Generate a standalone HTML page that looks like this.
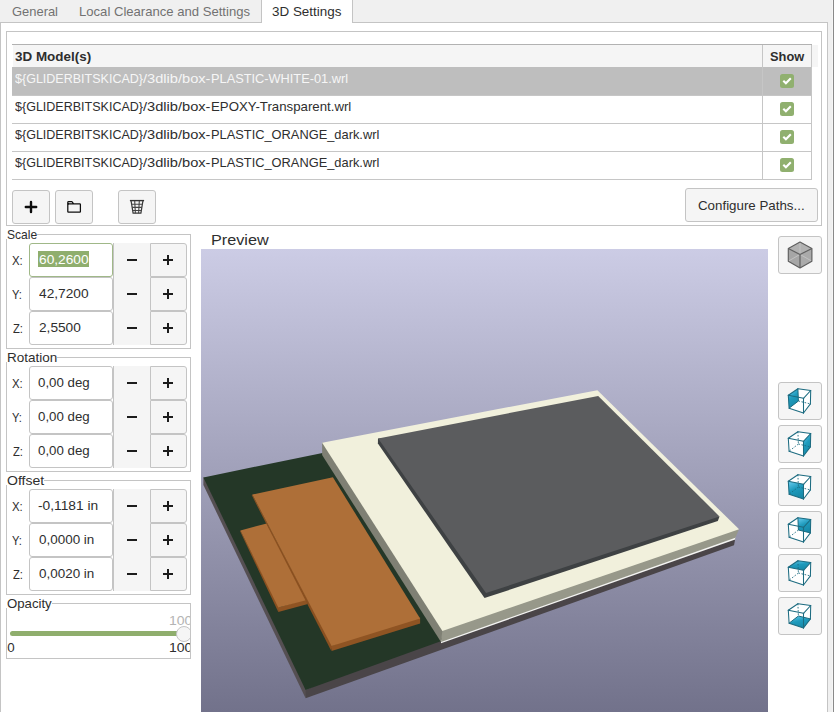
<!DOCTYPE html>
<html>
<head>
<meta charset="utf-8">
<title>3D Settings</title>
<style>
html,body{margin:0;padding:0;}
body{width:834px;height:712px;overflow:hidden;background:#f0f0f0;position:relative;
  font-family:"Liberation Sans",sans-serif;font-size:13.33px;color:#2e2e2e;}
.abs{position:absolute;}
.t{position:absolute;white-space:nowrap;line-height:16px;height:16px;transform-origin:0 50%;}
.b{font-weight:bold;}
#nb{left:0;top:22px;width:826px;height:700px;background:#fff;border:1px solid #c4c4c4;}
#tabline{left:0;top:21px;width:828px;height:1px;background:#c8c8c8;}
#tab3{left:261px;top:-2px;width:90px;height:24px;background:#fff;border:1px solid #c4c4c4;border-bottom:none;}
#rstrip{left:832px;top:0;width:1px;height:712px;background:#f6f6f6;}
#rstrip2{left:833px;top:0;width:1px;height:712px;background:#8a8a8a;}
.sbox{position:absolute;border:1px solid #c4c4c4;box-sizing:border-box;}
.sblab{position:absolute;background:#fff;white-space:nowrap;line-height:14px;height:14px;}
#gtop{left:12px;top:44px;width:800px;height:1px;background:#b2b2b2;}
#ghead{left:13px;top:45px;width:805px;height:22px;background:#f5f5f5;}
.grow{position:absolute;left:12px;width:799px;height:27px;border-bottom:1px solid #c6c6c6;}
.gsel{background:#bebebe;}
.gv{position:absolute;width:1px;background:#c6c6c6;}
.cb{position:absolute;left:780px;width:14px;height:14px;border-radius:2.5px;background:#90b06f;}
.cb svg{position:absolute;left:0;top:0;}
.btn{position:absolute;box-sizing:border-box;border:1px solid #c4c4c4;border-radius:3px;background:#f5f5f5;}
.ent{position:absolute;left:29px;width:84px;height:34px;box-sizing:border-box;border:1px solid #c4c4c4;border-radius:3px;background:#fff;}
.ent.foc{border-color:#a0b888;}
.minus{position:absolute;left:113px;width:37px;height:34px;box-sizing:border-box;background:#f5f5f5;border-left:1px solid #c4c4c4;}
.plus{position:absolute;left:150px;width:37px;height:34px;box-sizing:border-box;background:#f5f5f5;border:1px solid #c4c4c4;border-radius:0 3px 3px 0;}
.mi{position:absolute;left:13px;top:16px;width:10px;height:2px;background:#1c1c1c;}
.ph{position:absolute;left:12px;top:15px;width:10px;height:2px;background:#1c1c1c;}
.pv{position:absolute;left:16px;top:11px;width:2px;height:10px;background:#1c1c1c;}
</style>
</head>
<body>
<div class="abs" id="nb"></div>
<div class="abs" id="tab3"></div>
<div class="t" id="tx_gen" style="left:11.5px;top:4px;transform:scaleX(0.9700);color:#727272;">General</div>
<div class="t" id="tx_loc" style="left:79px;top:4px;transform:scaleX(0.9821);color:#727272;">Local Clearance and Settings</div>
<div class="t" id="tx_3d" style="left:272.2px;top:4px;transform:scaleX(1.0072);">3D Settings</div>
<div class="abs" id="rstrip"></div><div class="abs" id="rstrip2"></div>
<div class="sbox" style="left:6px;top:31px;width:816px;height:195px;"></div>
<div class="abs" id="gtop"></div><div class="abs" id="ghead"></div>
<div class="grow gsel" style="top:67px;height:28px;"></div>
<div class="grow" style="top:96px;"></div>
<div class="grow" style="top:124px;"></div>
<div class="grow" style="top:152px;"></div>
<div class="gv" style="left:762px;top:45px;height:135px;"></div>
<div class="gv" style="left:811px;top:45px;height:135px;"></div>
<div class="t b" id="tx_h1" style="left:15.1px;top:49px;transform:scaleX(1.0075);">3D Model(s)</div>
<div class="t b" id="tx_h2" style="left:770.2px;top:49px;transform:scaleX(0.9621);">Show</div>
<div class="t" id="tx_r1a" style="left:14.8px;top:70.6px;transform:scaleX(0.9391);color:#f6f6f6;">${GLIDERBITSKICAD}</div>
<div class="t" id="tx_r1b" style="left:142.8px;top:70.6px;transform:scaleX(1.0976);color:#f6f6f6;">/3dlib/box-</div>
<div class="t" id="tx_r1c" style="left:211.3px;top:70.6px;transform:scaleX(0.9586);color:#f6f6f6;">PLASTIC-WHITE-01.wrl</div>
<div class="t" id="tx_r2a" style="left:14.8px;top:98.6px;transform:scaleX(0.9391);">${GLIDERBITSKICAD}</div>
<div class="t" id="tx_r2b" style="left:142.8px;top:98.6px;transform:scaleX(1.0976);">/3dlib/box-</div>
<div class="t" id="tx_r2c" style="left:211.3px;top:98.6px;transform:scaleX(0.9934);">EPOXY-Transparent.wrl</div>
<div class="t" id="tx_r3a" style="left:14.8px;top:126.6px;transform:scaleX(0.9391);">${GLIDERBITSKICAD}</div>
<div class="t" id="tx_r3b" style="left:142.8px;top:126.6px;transform:scaleX(1.0976);">/3dlib/box-</div>
<div class="t" id="tx_r3c" style="left:211.3px;top:126.6px;transform:scaleX(0.9628);">PLASTIC_ORANGE_dark.wrl</div>
<div class="t" id="tx_r4a" style="left:14.8px;top:154.6px;transform:scaleX(0.9391);">${GLIDERBITSKICAD}</div>
<div class="t" id="tx_r4b" style="left:142.8px;top:154.6px;transform:scaleX(1.0976);">/3dlib/box-</div>
<div class="t" id="tx_r4c" style="left:211.3px;top:154.6px;transform:scaleX(0.9628);">PLASTIC_ORANGE_dark.wrl</div>
<div class="cb" style="top:74px;"><svg width="14" height="14" viewBox="0 0 14 14"><path d="M3.3 6.8 L5.9 9.3 L10.8 4.2" fill="none" stroke="#fff" stroke-width="2.1"/></svg></div>
<div class="cb" style="top:102px;"><svg width="14" height="14" viewBox="0 0 14 14"><path d="M3.3 6.8 L5.9 9.3 L10.8 4.2" fill="none" stroke="#fff" stroke-width="2.1"/></svg></div>
<div class="cb" style="top:130px;"><svg width="14" height="14" viewBox="0 0 14 14"><path d="M3.3 6.8 L5.9 9.3 L10.8 4.2" fill="none" stroke="#fff" stroke-width="2.1"/></svg></div>
<div class="cb" style="top:158px;"><svg width="14" height="14" viewBox="0 0 14 14"><path d="M3.3 6.8 L5.9 9.3 L10.8 4.2" fill="none" stroke="#fff" stroke-width="2.1"/></svg></div>
<div class="btn" style="left:12px;top:190px;width:38px;height:34px;">
<svg class="abs" style="left:-1px;top:-1px;" width="38" height="34" viewBox="0 0 38 34"><path d="M13.8 17 H24.2 M19 11.9 V22.1" fill="none" stroke="#0c0c0c" stroke-width="2.4" stroke-linecap="round"/></svg></div>
<div class="btn" style="left:55px;top:190px;width:38px;height:34px;">
<svg class="abs" style="left:-1px;top:-1px;" width="38" height="34" viewBox="0 0 38 34"><path d="M13.4 13.8 H24.8 Q25.4 13.8 25.4 14.4 V21.5 Q25.4 22.1 24.8 22.1 H13.4 Q12.8 22.1 12.8 21.5 V12.5 Q12.8 11.7 13.6 11.7 H16.9 L18.7 13.8" fill="none" stroke="#0e0e0e" stroke-width="1.25" stroke-linejoin="round"/><path d="M12.8 13.8 H14" fill="none" stroke="#0e0e0e" stroke-width="1.25"/></svg></div>
<div class="btn" style="left:118px;top:190px;width:38px;height:34px;">
<svg class="abs" style="left:-1px;top:-1px;" width="38" height="34" viewBox="0 0 38 34">
<path d="M11.9 10.6 H26.1" stroke="#333" stroke-width="1.4" fill="none"/>
<path d="M13.1 11 L15.1 23.2 H22.9 L24.9 11" stroke="#3a3a3a" stroke-width="1.25" fill="none"/>
<path d="M16.7 11 L17.4 23.2 M21.3 11 L20.6 23.2 M13.6 14.3 H24.4 M14.1 17.4 H23.9 M14.6 20.5 H23.4" stroke="#444" stroke-width="1.1" fill="none"/>
</svg></div>
<div class="btn" style="left:685px;top:188px;width:133px;height:34px;"></div>
<div class="t" id="tx_cfg" style="left:698.4px;top:197.9px;transform:scaleX(0.9992);">Configure Paths...</div>
<div class="sbox" style="left:6px;top:234px;width:185px;height:115px;"></div>
<div class="abs" style="left:6px;top:233px;width:31px;height:6px;background:#fff;"></div>
<div class="t" id="tx_g0" style="left:6.6px;top:226.8px;transform:scaleX(0.9057);">Scale</div>
<div class="minus" style="top:243px;"><div class="mi"></div></div>
<div class="plus" style="top:243px;"><div class="ph"></div><div class="pv"></div></div>
<div class="ent foc" style="top:243px;"></div>
<div class="abs" style="left:38px;top:251px;width:51px;height:16px;background:#8fae6d;"></div>
<div class="t" id="tx_l00" style="left:12.4px;top:252.8px;transform:scaleX(0.8576);">X:</div>
<div class="t" id="tx_v00" style="left:38.6px;top:252.3px;transform:scaleX(1.0293);color:#fff;">60,2600</div>
<div class="minus" style="top:277px;"><div class="mi"></div></div>
<div class="plus" style="top:277px;"><div class="ph"></div><div class="pv"></div></div>
<div class="ent" style="top:277px;"></div>
<div class="t" id="tx_l01" style="left:12.4px;top:286.8px;transform:scaleX(0.8348);">Y:</div>
<div class="t" id="tx_v01" style="left:38.6px;top:286.3px;transform:scaleX(1.0293);">42,7200</div>
<div class="minus" style="top:311px;"><div class="mi"></div></div>
<div class="plus" style="top:311px;"><div class="ph"></div><div class="pv"></div></div>
<div class="ent" style="top:311px;"></div>
<div class="t" id="tx_l02" style="left:12.8px;top:320.8px;transform:scaleX(0.8432);">Z:</div>
<div class="t" id="tx_v02" style="left:38.6px;top:320.3px;transform:scaleX(1.0254);">2,5500</div>
<div class="sbox" style="left:6px;top:357px;width:185px;height:115px;"></div>
<div class="abs" style="left:6px;top:356px;width:51px;height:6px;background:#fff;"></div>
<div class="t" id="tx_g1" style="left:6.6px;top:349.8px;transform:scaleX(1.0130);">Rotation</div>
<div class="minus" style="top:366px;"><div class="mi"></div></div>
<div class="plus" style="top:366px;"><div class="ph"></div><div class="pv"></div></div>
<div class="ent" style="top:366px;"></div>
<div class="t" id="tx_l10" style="left:12.4px;top:375.8px;transform:scaleX(0.8576);">X:</div>
<div class="t" id="tx_v10" style="left:38.2px;top:375.3px;transform:scaleX(0.9963);">0,00 deg</div>
<div class="minus" style="top:400px;"><div class="mi"></div></div>
<div class="plus" style="top:400px;"><div class="ph"></div><div class="pv"></div></div>
<div class="ent" style="top:400px;"></div>
<div class="t" id="tx_l11" style="left:12.4px;top:409.8px;transform:scaleX(0.8348);">Y:</div>
<div class="t" id="tx_v11" style="left:38.2px;top:409.3px;transform:scaleX(0.9963);">0,00 deg</div>
<div class="minus" style="top:434px;"><div class="mi"></div></div>
<div class="plus" style="top:434px;"><div class="ph"></div><div class="pv"></div></div>
<div class="ent" style="top:434px;"></div>
<div class="t" id="tx_l12" style="left:12.8px;top:443.8px;transform:scaleX(0.8432);">Z:</div>
<div class="t" id="tx_v12" style="left:38.2px;top:443.3px;transform:scaleX(0.9963);">0,00 deg</div>
<div class="sbox" style="left:6px;top:480px;width:185px;height:115px;"></div>
<div class="abs" style="left:6px;top:479px;width:38px;height:6px;background:#fff;"></div>
<div class="t" id="tx_g2" style="left:6.6px;top:472.8px;transform:scaleX(1.0535);">Offset</div>
<div class="minus" style="top:489px;"><div class="mi"></div></div>
<div class="plus" style="top:489px;"><div class="ph"></div><div class="pv"></div></div>
<div class="ent" style="top:489px;"></div>
<div class="t" id="tx_l20" style="left:12.4px;top:498.8px;transform:scaleX(0.8576);">X:</div>
<div class="t" id="tx_v20" style="left:38px;top:498.3px;transform:scaleX(1.0326);">-0,1181 in</div>
<div class="minus" style="top:523px;"><div class="mi"></div></div>
<div class="plus" style="top:523px;"><div class="ph"></div><div class="pv"></div></div>
<div class="ent" style="top:523px;"></div>
<div class="t" id="tx_l21" style="left:12.4px;top:532.8px;transform:scaleX(0.8348);">Y:</div>
<div class="t" id="tx_v21" style="left:38.7px;top:532.3px;transform:scaleX(1.0083);">0,0000 in</div>
<div class="minus" style="top:557px;"><div class="mi"></div></div>
<div class="plus" style="top:557px;"><div class="ph"></div><div class="pv"></div></div>
<div class="ent" style="top:557px;"></div>
<div class="t" id="tx_l22" style="left:12.8px;top:566.8px;transform:scaleX(0.8432);">Z:</div>
<div class="t" id="tx_v22" style="left:38.7px;top:566.3px;transform:scaleX(1.0083);">0,0020 in</div>
<div class="sbox" style="left:6px;top:603px;width:185px;height:56px;"></div>
<div class="abs" style="left:6px;top:602px;width:46px;height:6px;background:#fff;"></div>
<div class="t" id="tx_g3" style="left:6.6px;top:595.8px;transform:scaleX(0.9892);">Opacity</div>
<div class="abs" style="left:10px;top:631px;width:176px;height:5px;border-radius:2.5px;background:#8fae6d;"></div>
<div class="abs" style="left:6px;top:600px;width:184px;height:60px;overflow:hidden;"><div class="abs" style="left:170px;top:25.6px;width:16px;height:16px;box-sizing:border-box;border-radius:8px;border:1px solid #c4c4c4;background:#f5f5f5;"></div><div class="t" id="tx_o1" style="left:162.7px;top:13px;color:#b4b4b4;transform:scaleX(1.05);">100</div><div class="t" id="tx_o2" style="left:162.7px;top:40px;transform:scaleX(1.05);">100</div></div>
<div class="t" id="tx_o0" style="left:7.3px;top:640px;">0</div>
<div class="t" id="tx_prev" style="left:210.6px;top:231.8px;transform:scaleX(1.1116);font-size:14.6px;">Preview</div>
<div class="abs" id="canvas" style="left:201px;top:249px;width:567px;height:463px;overflow:hidden;background:linear-gradient(#cccce5 0px,#66667f 524px);">
<svg class="abs" style="left:0;top:0;" width="567" height="463" viewBox="201 249 567 463">
<!-- pcb sides -->
<polygon points="203.4,477.4 203.4,485 305.6,698.2 306.6,690 210,478" fill="#554f52"/>
<polygon points="305.6,690 305.6,698.2 734,545.2 735.4,537.8 600,560" fill="#4a4548"/>
<!-- pcb top -->
<polygon points="203.4,477.4 322.5,453 500,480 733,536 305.6,690" fill="#243727"/>
<!-- small orange -->
<polygon points="240.4,530.4 240.2,531.6 278.3,612 279.3,607.4" fill="#8a5020"/>
<polygon points="278.3,607.4 278.3,612 307,604.2 307,599" fill="#8f5423"/>
<polygon points="240.4,530.4 266.7,523.5 307,600 278.3,607.4" fill="#ae6f38"/>
<!-- big orange -->
<polygon points="252.3,494.5 251.9,495.6 331.2,650.8 332.6,646" fill="#8a5020"/>
<polygon points="331.6,646 331.6,651 420.1,623.5 420.1,617.6 380,625" fill="#8f5423"/>
<polygon points="252.3,494.5 332.9,477.2 420.1,618.6 331.6,646" fill="#ae6f38"/>
<!-- white box -->
<polygon points="441,640 441,643.2 735.2,539.5 735.4,536.5" fill="#f4f4f2"/>
<polygon points="322.1,442.7 322.1,455 441,641.9 443.4,631 330,443" fill="#7f8074"/>
<polygon points="442.4,630 441,641.9 735.4,537.8 739,529.2 700,535" fill="#97988a"/>
<polygon points="322.1,442.7 597.4,390.2 739.1,529.3 442.4,631" fill="#f1f0dc"/>
<!-- dark grey box -->
<polygon points="378,438.4 377.9,443.6 484.5,598.1 487.4,593 381,438.4" fill="#3e4143"/>
<polygon points="486,592 484.5,598.1 717.8,520.9 719.5,516.4 700,518" fill="#3e4143"/>
<polygon points="378.2,438.4 598.2,395.9 719.5,516.4 486,593" fill="#5b5c5e"/>
</svg>

</div>
<div class="btn" style="left:778px;top:236px;width:44px;height:38px;"><svg class="abs" style="left:-1px;top:-1px;" width="44" height="38" viewBox="0 0 44 38"><polygon points="22.0,6.1 33.9,12.4 22.0,18.4 10.3,12.4" fill="#b2b2b2"/><polygon points="10.3,12.4 22.0,18.4 22.0,32.0 10.3,25.2" fill="#a6a6a6"/><polygon points="22.0,18.4 33.9,12.4 33.9,25.2 22.0,32.0" fill="#aaaaaa"/><line x1="22" y1="18.4" x2="10.3" y2="25.2" stroke="#c2c2c2" stroke-width="1"/><line x1="22" y1="18.4" x2="33.9" y2="25.2" stroke="#c2c2c2" stroke-width="1"/><line x1="22" y1="18.4" x2="22" y2="6.1" stroke="#c2c2c2" stroke-width="1"/><polygon points="22.0,6.1 33.9,12.4 33.9,25.2 22.0,32.0 10.3,25.2 10.3,12.4" fill="none" stroke="#5e5e5e" stroke-width="1.15" stroke-linejoin="round"/><line x1="22" y1="18.4" x2="10.3" y2="12.4" stroke="#5e5e5e" stroke-width="1.15"/><line x1="22" y1="18.4" x2="33.9" y2="12.4" stroke="#5e5e5e" stroke-width="1.15"/><line x1="22" y1="18.4" x2="22" y2="32" stroke="#5e5e5e" stroke-width="1.15"/></svg></div>
<div class="btn" style="left:778px;top:382px;width:44px;height:38px;"><svg class="abs" style="left:-1px;top:-1px;" width="44" height="38" viewBox="0 0 44 38"><defs><linearGradient id="tg0" x1="0.2" y1="0" x2="0.6" y2="1"><stop offset="0" stop-color="#63c8ea"/><stop offset="0.45" stop-color="#1f9bbd"/><stop offset="1" stop-color="#1788a6"/></linearGradient></defs><polygon points="10.3,13.3 19.9,6.7 32.7,8.5 32.4,21.9 25.5,31.0 11.1,26.2" fill="#fff" stroke="none"/><polygon points="10.3,13.3 19.9,6.7 20.4,19.0 11.1,26.2" fill="url(#tg0)" stroke="none"/><line x1="19.9" y1="6.7" x2="20.4" y2="19.0" stroke="#1c6b80" stroke-width="1.0"/><line x1="20.4" y1="19.0" x2="32.4" y2="21.9" stroke="#1c6b80" stroke-width="0.9" stroke-dasharray="1.6 1.6"/><line x1="20.4" y1="19.0" x2="11.1" y2="26.2" stroke="#1c6b80" stroke-width="1.0"/><line x1="10.3" y1="13.3" x2="25.5" y2="16.3" stroke="#1c6b80" stroke-width="1.05" stroke-linecap="round"/><line x1="25.5" y1="16.3" x2="25.5" y2="31.0" stroke="#1c6b80" stroke-width="1.05" stroke-linecap="round"/><line x1="25.5" y1="31.0" x2="11.1" y2="26.2" stroke="#1c6b80" stroke-width="1.05" stroke-linecap="round"/><line x1="11.1" y1="26.2" x2="10.3" y2="13.3" stroke="#1c6b80" stroke-width="1.05" stroke-linecap="round"/><line x1="10.3" y1="13.3" x2="19.9" y2="6.7" stroke="#1c6b80" stroke-width="1.05" stroke-linecap="round"/><line x1="19.9" y1="6.7" x2="32.7" y2="8.5" stroke="#1c6b80" stroke-width="1.05" stroke-linecap="round"/><line x1="32.7" y1="8.5" x2="25.5" y2="16.3" stroke="#1c6b80" stroke-width="1.05" stroke-linecap="round"/><line x1="32.7" y1="8.5" x2="32.4" y2="21.9" stroke="#1c6b80" stroke-width="1.05" stroke-linecap="round"/><line x1="32.4" y1="21.9" x2="25.5" y2="31.0" stroke="#1c6b80" stroke-width="1.05" stroke-linecap="round"/></svg></div>
<div class="btn" style="left:778px;top:425px;width:44px;height:38px;"><svg class="abs" style="left:-1px;top:-1px;" width="44" height="38" viewBox="0 0 44 38"><defs><linearGradient id="tg1" x1="0.2" y1="0" x2="0.6" y2="1"><stop offset="0" stop-color="#63c8ea"/><stop offset="0.45" stop-color="#1f9bbd"/><stop offset="1" stop-color="#1788a6"/></linearGradient></defs><polygon points="10.3,13.3 19.9,6.7 32.7,8.5 32.4,21.9 25.5,31.0 11.1,26.2" fill="#fff" stroke="none"/><polygon points="25.5,16.3 32.7,8.5 32.4,21.9 25.5,31.0" fill="url(#tg1)" stroke="none"/><line x1="19.9" y1="6.7" x2="20.4" y2="19.0" stroke="#1c6b80" stroke-width="0.9" stroke-dasharray="1.6 1.6"/><line x1="20.4" y1="19.0" x2="32.4" y2="21.9" stroke="#1c6b80" stroke-width="0.9" stroke-dasharray="1.6 1.6"/><line x1="20.4" y1="19.0" x2="11.1" y2="26.2" stroke="#1c6b80" stroke-width="0.9" stroke-dasharray="1.6 1.6"/><line x1="10.3" y1="13.3" x2="25.5" y2="16.3" stroke="#1c6b80" stroke-width="1.05" stroke-linecap="round"/><line x1="25.5" y1="16.3" x2="25.5" y2="31.0" stroke="#1c6b80" stroke-width="1.05" stroke-linecap="round"/><line x1="25.5" y1="31.0" x2="11.1" y2="26.2" stroke="#1c6b80" stroke-width="1.05" stroke-linecap="round"/><line x1="11.1" y1="26.2" x2="10.3" y2="13.3" stroke="#1c6b80" stroke-width="1.05" stroke-linecap="round"/><line x1="10.3" y1="13.3" x2="19.9" y2="6.7" stroke="#1c6b80" stroke-width="1.05" stroke-linecap="round"/><line x1="19.9" y1="6.7" x2="32.7" y2="8.5" stroke="#1c6b80" stroke-width="1.05" stroke-linecap="round"/><line x1="32.7" y1="8.5" x2="25.5" y2="16.3" stroke="#1c6b80" stroke-width="1.05" stroke-linecap="round"/><line x1="32.7" y1="8.5" x2="32.4" y2="21.9" stroke="#1c6b80" stroke-width="1.05" stroke-linecap="round"/><line x1="32.4" y1="21.9" x2="25.5" y2="31.0" stroke="#1c6b80" stroke-width="1.05" stroke-linecap="round"/></svg></div>
<div class="btn" style="left:778px;top:468px;width:44px;height:38px;"><svg class="abs" style="left:-1px;top:-1px;" width="44" height="38" viewBox="0 0 44 38"><defs><linearGradient id="tg2" x1="0.2" y1="0" x2="0.6" y2="1"><stop offset="0" stop-color="#63c8ea"/><stop offset="0.45" stop-color="#1f9bbd"/><stop offset="1" stop-color="#1788a6"/></linearGradient></defs><polygon points="10.3,13.3 19.9,6.7 32.7,8.5 32.4,21.9 25.5,31.0 11.1,26.2" fill="#fff" stroke="none"/><polygon points="10.3,13.3 25.5,16.3 25.5,31.0 11.1,26.2" fill="url(#tg2)" stroke="none"/><line x1="19.9" y1="6.7" x2="20.4" y2="19.0" stroke="#1c6b80" stroke-width="0.9" stroke-dasharray="1.6 1.6"/><line x1="20.4" y1="19.0" x2="32.4" y2="21.9" stroke="#1c6b80" stroke-width="0.9" stroke-dasharray="1.6 1.6"/><line x1="20.4" y1="19.0" x2="11.1" y2="26.2" stroke="#1c6b80" stroke-width="0.9" stroke-dasharray="1.6 1.6"/><line x1="10.3" y1="13.3" x2="25.5" y2="16.3" stroke="#1c6b80" stroke-width="1.05" stroke-linecap="round"/><line x1="25.5" y1="16.3" x2="25.5" y2="31.0" stroke="#1c6b80" stroke-width="1.05" stroke-linecap="round"/><line x1="25.5" y1="31.0" x2="11.1" y2="26.2" stroke="#1c6b80" stroke-width="1.05" stroke-linecap="round"/><line x1="11.1" y1="26.2" x2="10.3" y2="13.3" stroke="#1c6b80" stroke-width="1.05" stroke-linecap="round"/><line x1="10.3" y1="13.3" x2="19.9" y2="6.7" stroke="#1c6b80" stroke-width="1.05" stroke-linecap="round"/><line x1="19.9" y1="6.7" x2="32.7" y2="8.5" stroke="#1c6b80" stroke-width="1.05" stroke-linecap="round"/><line x1="32.7" y1="8.5" x2="25.5" y2="16.3" stroke="#1c6b80" stroke-width="1.05" stroke-linecap="round"/><line x1="32.7" y1="8.5" x2="32.4" y2="21.9" stroke="#1c6b80" stroke-width="1.05" stroke-linecap="round"/><line x1="32.4" y1="21.9" x2="25.5" y2="31.0" stroke="#1c6b80" stroke-width="1.05" stroke-linecap="round"/></svg></div>
<div class="btn" style="left:778px;top:511px;width:44px;height:38px;"><svg class="abs" style="left:-1px;top:-1px;" width="44" height="38" viewBox="0 0 44 38"><defs><linearGradient id="tg3" x1="0.2" y1="0" x2="0.6" y2="1"><stop offset="0" stop-color="#63c8ea"/><stop offset="0.45" stop-color="#1f9bbd"/><stop offset="1" stop-color="#1788a6"/></linearGradient></defs><polygon points="10.3,13.3 19.9,6.7 32.7,8.5 32.4,21.9 25.5,31.0 11.1,26.2" fill="#fff" stroke="none"/><polygon points="19.9,6.7 32.7,8.5 32.4,21.9 20.4,19.0" fill="url(#tg3)" stroke="none"/><line x1="19.9" y1="6.7" x2="20.4" y2="19.0" stroke="#1c6b80" stroke-width="1.0"/><line x1="20.4" y1="19.0" x2="32.4" y2="21.9" stroke="#1c6b80" stroke-width="1.0"/><line x1="20.4" y1="19.0" x2="11.1" y2="26.2" stroke="#1c6b80" stroke-width="0.9" stroke-dasharray="1.6 1.6"/><line x1="10.3" y1="13.3" x2="25.5" y2="16.3" stroke="#1c6b80" stroke-width="1.05" stroke-linecap="round"/><line x1="25.5" y1="16.3" x2="25.5" y2="31.0" stroke="#1c6b80" stroke-width="1.05" stroke-linecap="round"/><line x1="25.5" y1="31.0" x2="11.1" y2="26.2" stroke="#1c6b80" stroke-width="1.05" stroke-linecap="round"/><line x1="11.1" y1="26.2" x2="10.3" y2="13.3" stroke="#1c6b80" stroke-width="1.05" stroke-linecap="round"/><line x1="10.3" y1="13.3" x2="19.9" y2="6.7" stroke="#1c6b80" stroke-width="1.05" stroke-linecap="round"/><line x1="19.9" y1="6.7" x2="32.7" y2="8.5" stroke="#1c6b80" stroke-width="1.05" stroke-linecap="round"/><line x1="32.7" y1="8.5" x2="25.5" y2="16.3" stroke="#1c6b80" stroke-width="1.05" stroke-linecap="round"/><line x1="32.7" y1="8.5" x2="32.4" y2="21.9" stroke="#1c6b80" stroke-width="1.05" stroke-linecap="round"/><line x1="32.4" y1="21.9" x2="25.5" y2="31.0" stroke="#1c6b80" stroke-width="1.05" stroke-linecap="round"/></svg></div>
<div class="btn" style="left:778px;top:554px;width:44px;height:38px;"><svg class="abs" style="left:-1px;top:-1px;" width="44" height="38" viewBox="0 0 44 38"><defs><linearGradient id="tg4" x1="0.2" y1="0" x2="0.6" y2="1"><stop offset="0" stop-color="#63c8ea"/><stop offset="0.45" stop-color="#1f9bbd"/><stop offset="1" stop-color="#1788a6"/></linearGradient></defs><polygon points="10.3,13.3 19.9,6.7 32.7,8.5 32.4,21.9 25.5,31.0 11.1,26.2" fill="#fff" stroke="none"/><polygon points="10.3,13.3 25.5,16.3 32.7,8.5 19.9,6.7" fill="url(#tg4)" stroke="none"/><line x1="19.9" y1="6.7" x2="20.4" y2="19.0" stroke="#1c6b80" stroke-width="0.9" stroke-dasharray="1.6 1.6"/><line x1="20.4" y1="19.0" x2="32.4" y2="21.9" stroke="#1c6b80" stroke-width="0.9" stroke-dasharray="1.6 1.6"/><line x1="20.4" y1="19.0" x2="11.1" y2="26.2" stroke="#1c6b80" stroke-width="0.9" stroke-dasharray="1.6 1.6"/><line x1="10.3" y1="13.3" x2="25.5" y2="16.3" stroke="#1c6b80" stroke-width="1.05" stroke-linecap="round"/><line x1="25.5" y1="16.3" x2="25.5" y2="31.0" stroke="#1c6b80" stroke-width="1.05" stroke-linecap="round"/><line x1="25.5" y1="31.0" x2="11.1" y2="26.2" stroke="#1c6b80" stroke-width="1.05" stroke-linecap="round"/><line x1="11.1" y1="26.2" x2="10.3" y2="13.3" stroke="#1c6b80" stroke-width="1.05" stroke-linecap="round"/><line x1="10.3" y1="13.3" x2="19.9" y2="6.7" stroke="#1c6b80" stroke-width="1.05" stroke-linecap="round"/><line x1="19.9" y1="6.7" x2="32.7" y2="8.5" stroke="#1c6b80" stroke-width="1.05" stroke-linecap="round"/><line x1="32.7" y1="8.5" x2="25.5" y2="16.3" stroke="#1c6b80" stroke-width="1.05" stroke-linecap="round"/><line x1="32.7" y1="8.5" x2="32.4" y2="21.9" stroke="#1c6b80" stroke-width="1.05" stroke-linecap="round"/><line x1="32.4" y1="21.9" x2="25.5" y2="31.0" stroke="#1c6b80" stroke-width="1.05" stroke-linecap="round"/></svg></div>
<div class="btn" style="left:778px;top:597px;width:44px;height:38px;"><svg class="abs" style="left:-1px;top:-1px;" width="44" height="38" viewBox="0 0 44 38"><defs><linearGradient id="tg5" x1="0.2" y1="0" x2="0.6" y2="1"><stop offset="0" stop-color="#63c8ea"/><stop offset="0.45" stop-color="#1f9bbd"/><stop offset="1" stop-color="#1788a6"/></linearGradient></defs><polygon points="10.3,13.3 19.9,6.7 32.7,8.5 32.4,21.9 25.5,31.0 11.1,26.2" fill="#fff" stroke="none"/><polygon points="11.1,26.2 25.5,31.0 32.4,21.9 20.4,19.0" fill="url(#tg5)" stroke="none"/><line x1="19.9" y1="6.7" x2="20.4" y2="19.0" stroke="#1c6b80" stroke-width="0.9" stroke-dasharray="1.6 1.6"/><line x1="20.4" y1="19.0" x2="32.4" y2="21.9" stroke="#1c6b80" stroke-width="1.0"/><line x1="20.4" y1="19.0" x2="11.1" y2="26.2" stroke="#1c6b80" stroke-width="1.0"/><line x1="10.3" y1="13.3" x2="25.5" y2="16.3" stroke="#1c6b80" stroke-width="1.05" stroke-linecap="round"/><line x1="25.5" y1="16.3" x2="25.5" y2="31.0" stroke="#1c6b80" stroke-width="1.05" stroke-linecap="round"/><line x1="25.5" y1="31.0" x2="11.1" y2="26.2" stroke="#1c6b80" stroke-width="1.05" stroke-linecap="round"/><line x1="11.1" y1="26.2" x2="10.3" y2="13.3" stroke="#1c6b80" stroke-width="1.05" stroke-linecap="round"/><line x1="10.3" y1="13.3" x2="19.9" y2="6.7" stroke="#1c6b80" stroke-width="1.05" stroke-linecap="round"/><line x1="19.9" y1="6.7" x2="32.7" y2="8.5" stroke="#1c6b80" stroke-width="1.05" stroke-linecap="round"/><line x1="32.7" y1="8.5" x2="25.5" y2="16.3" stroke="#1c6b80" stroke-width="1.05" stroke-linecap="round"/><line x1="32.7" y1="8.5" x2="32.4" y2="21.9" stroke="#1c6b80" stroke-width="1.05" stroke-linecap="round"/><line x1="32.4" y1="21.9" x2="25.5" y2="31.0" stroke="#1c6b80" stroke-width="1.05" stroke-linecap="round"/></svg></div>
</body>
</html>
